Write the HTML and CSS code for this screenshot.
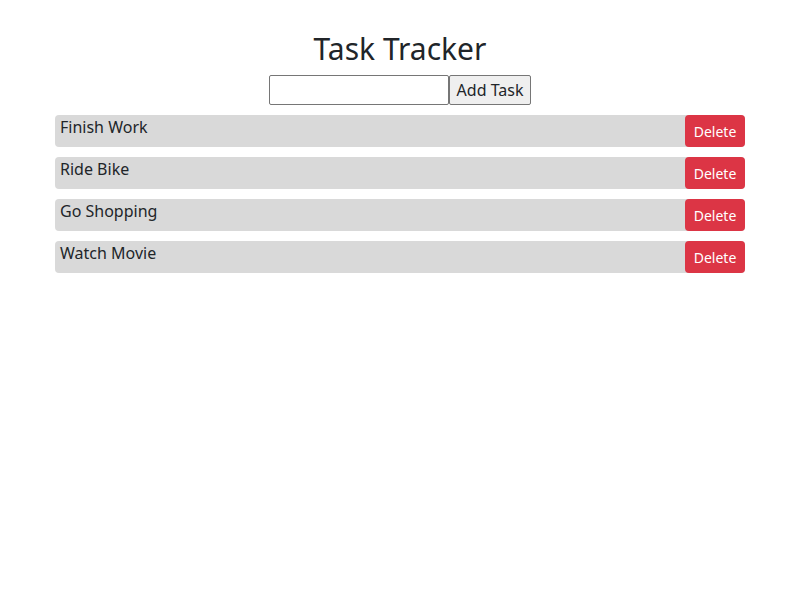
FILE: index.html
```html
<!DOCTYPE html>
<html>
<head>
<meta charset="utf-8">
<title>Task Tracker</title>
<link rel="stylesheet" href="styles.css">
</head>
<body>
<div class="app">
  <h1 class="title">Task Tracker</h1>
  <form class="add-form">
    <input class="add-input" type="text">
    <button class="add-btn" type="button">Add Task</button>
  </form>
  <ul class="tasks">
    <li class="task"><span class="task-text">Finish Work</span><button class="del-btn" type="button">Delete</button></li>
    <li class="task"><span class="task-text">Ride Bike</span><button class="del-btn" type="button">Delete</button></li>
    <li class="task"><span class="task-text">Go Shopping</span><button class="del-btn" type="button">Delete</button></li>
    <li class="task"><span class="task-text">Watch Movie</span><button class="del-btn" type="button">Delete</button></li>
  </ul>
</div>
</body>
</html>
```
FILE: styles.css
```css
html, body {
  margin: 0;
  padding: 0;
  background: #fff;
}
body {
  font-family: "Noto Sans", "Open Sans", sans-serif;
  color: #212529;
}
.app {
  padding: 0 55px;
}
.title {
  margin: 0;
  padding-top: 26px;
  font-size: 30px;
  font-weight: 400;
  line-height: 45px;
  text-align: center;
}
.add-form {
  display: flex;
  justify-content: center;
  margin-top: 4px;
}
.add-input {
  box-sizing: border-box;
  width: 180px;
  height: 30px;
  border: 1px solid #767676;
  border-radius: 2px;
  margin: 0;
  padding: 0 4px;
}
.add-btn {
  box-sizing: border-box;
  height: 30px;
  margin: 0;
  padding: 0 7px;
  border: 1px solid #767676;
  border-radius: 2px;
  background: #efefef;
  color: #212529;
  font-family: inherit;
  font-size: 16px;
}
.tasks {
  list-style: none;
  margin: 10px 0 0;
  padding: 0;
  display: flex;
  flex-direction: column;
  gap: 10px;
}
.task {
  display: flex;
  justify-content: space-between;
  align-items: flex-start;
  background: #d9d9d9;
  border-radius: 4px;
  height: 32px;
}
.task-text {
  padding: 1px 5px 0;
  font-size: 16px;
  line-height: 22px;
}
.del-btn {
  height: 32px;
  width: 60px;
  padding: 0;
  border: none;
  border-radius: 4px;
  background: #dc3545;
  color: #fff;
  font-family: inherit;
  font-size: 14px;
}
```
